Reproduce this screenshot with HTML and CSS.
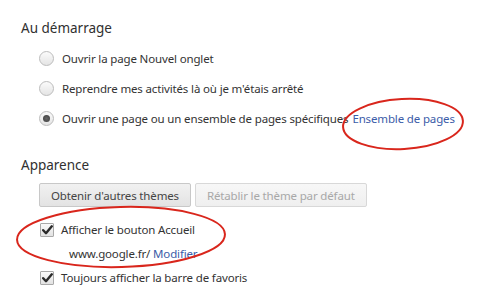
FILE: index.html
```html
<!DOCTYPE html>
<html lang="fr">
<head>
    <meta charset="utf-8" />
    <title>Paramètres</title>
    <link rel="stylesheet" href="styles.css">
</head>
<body>
    <div class="settings">
        <div class="section">
            <div class="section_title">Au démarrage</div>
            <div class="radio_list">
                <div class="radio_row"><span class="radio"></span>Ouvrir la page Nouvel onglet</div>
                <div class="radio_row"><span class="radio"></span>Reprendre mes activités là où je m'étais arrêté</div>
                <div class="radio_row"><span class="radio checked"></span>Ouvrir une page ou un ensemble de pages spécifiques<a class="link pages_link">Ensemble de pages</a></div>
            </div>
        </div>

        <div class="section appearance">
            <div class="section_title">Apparence</div>
            <div class="button_row">
                <button class="btn">Obtenir d'autres thèmes</button>
                <button class="btn disabled">Rétablir le thème par défaut</button>
            </div>
            <div class="check_row first">
                <span class="checkbox">
                    <svg width="11" height="10" viewBox="0 0 11 10"><path d="M1.2 5.2 L4 8.2 L9.8 1.3" fill="none" stroke="#2b2b2b" stroke-width="2.4" stroke-linecap="round" stroke-linejoin="round"/></svg>
                </span>Afficher le bouton Accueil
            </div>
            <div class="home_url">www.google.fr/ <a class="link">Modifier</a></div>
            <div class="check_row">
                <span class="checkbox">
                    <svg width="11" height="10" viewBox="0 0 11 10"><path d="M1.2 5.2 L4 8.2 L9.8 1.3" fill="none" stroke="#2b2b2b" stroke-width="2.4" stroke-linecap="round" stroke-linejoin="round"/></svg>
                </span>Toujours afficher la barre de favoris
            </div>
        </div>
    </div>

    <!-- annotations -->
    <svg class="marks" width="488" height="302" viewBox="0 0 488 302">
        <ellipse cx="403" cy="124" rx="60" ry="25" transform="rotate(-3 403 124)" fill="none" stroke="#d9261c" stroke-width="2"/>
        <ellipse cx="121" cy="237" rx="104" ry="30" transform="rotate(-1.5 121 237)" fill="none" stroke="#d9261c" stroke-width="2"/>
    </svg>
</body>
</html>
```

FILE: styles.css
```css
html, body {
    margin: 0;
    padding: 0;
    background: #fff;
    font-family: "Noto Sans", "Open Sans", sans-serif;
    font-size: 11.5px;
    letter-spacing: -0.15px;
    color: #333;
    overflow: hidden;
}

.settings {
    padding: 17px 0 0 21px;
}

.section_title {
    font-size: 13.5px;
    letter-spacing: 0;
    color: #303030;
    height: 22px;
    line-height: 22px;
}

.radio_list {
    padding: 4px 0 0 18px;
}

.radio_row {
    display: flex;
    align-items: center;
    height: 30px;
}

.radio {
    width: 13px;
    height: 13px;
    border: 1px solid #bcbcbc;
    border-radius: 50%;
    background: linear-gradient(#fbfbfb, #e4e4e4);
    margin-right: 8px;
    position: relative;
    flex: none;
}

    .radio.checked:after {
        content: "";
        position: absolute;
        left: 3px;
        top: 3px;
        width: 7px;
        height: 7px;
        border-radius: 50%;
        background: radial-gradient(#666, #3c3c3c);
    }

.link {
    color: #3b5ca8;
    text-decoration: none;
}

.pages_link {
    margin-left: 4px;
}

.appearance {
    margin-top: 21px;
}

.button_row {
    display: flex;
    gap: 4px;
    padding: 7px 0 0 18px;
}

.btn {
    height: 24px;
    padding: 0 11px;
    border: 1px solid #c8c8c8;
    border-radius: 2px;
    background: linear-gradient(#f1f1f1, #e3e3e3);
    font-family: inherit;
    font-size: 11.5px;
    letter-spacing: -0.15px;
    color: #444;
}

    .btn.disabled {
        color: #a8a8a8;
        background: linear-gradient(#f7f7f7, #efefef);
        border-color: #d8d8d8;
    }

.check_row {
    display: flex;
    align-items: center;
    height: 23px;
    padding-left: 19px;
}

    .check_row.first {
        margin-top: 11px;
    }

.checkbox {
    width: 12px;
    height: 12px;
    border: 1px solid #a9a9a9;
    border-radius: 1px;
    background: linear-gradient(#fafafa, #e2e2e2);
    margin-right: 7px;
    display: flex;
    align-items: center;
    justify-content: center;
    flex: none;
}

.home_url {
    height: 24px;
    line-height: 24px;
    padding: 1px 0 0 48px;
}

.marks {
    position: absolute;
    left: 0;
    top: 0;
    pointer-events: none;
}
```
